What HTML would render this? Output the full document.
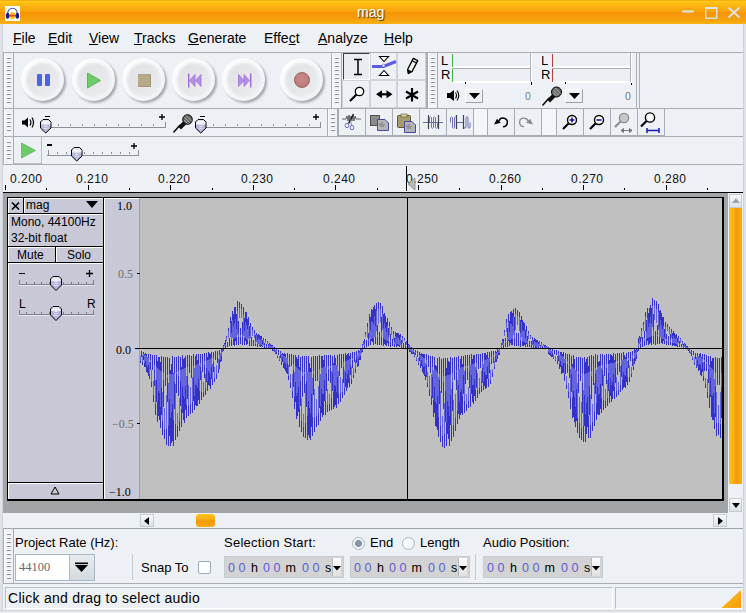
<!DOCTYPE html>
<html><head><meta charset="utf-8"><style>
*{margin:0;padding:0;box-sizing:border-box}
html,body{width:746px;height:613px;overflow:hidden;background:#edf0f5;font-family:"Liberation Sans", sans-serif;color:#000}
.a{position:absolute}
.t{position:absolute;white-space:nowrap;line-height:1}
.grip{position:absolute;border-left:1px solid #a9adb3;border-right:1px solid #a9adb3;box-shadow:inset 1px 0 0 #fff;
 background:repeating-linear-gradient(to bottom, transparent 0 2px, #fbfcfd 2px 3px, #8e9298 3px 4px) 3px 2px/4px calc(100% - 4px) no-repeat}
.hl{position:absolute;height:1px;background:#a9adb3}
.vl{position:absolute;width:1px;background:#a9adb3}
.eb{position:absolute;top:109px;width:28px;height:27px;border-left:1px solid #a9adb3;border-right:1px solid #a9adb3;border-bottom:1px solid #a9adb3}
.tb{position:absolute;width:28px;height:28px;border:1px solid #c8ccd2}
u{text-decoration:underline;text-underline-offset:1px;text-decoration-thickness:1px}
</style></head><body>
<div class="a" style="left:0;top:0;width:746px;height:24px;background:linear-gradient(to bottom,#f2b015 0px,#f2b015 1px,#ffc814 1px,#fdbb12 4px,#fbac0e 8px,#f9a30c 12px,#f79500 12px,#f5990a 15px,#f4a00e 19px,#f6ab12 22.5px,#f9b515 24px)"></div>
<div class="a" style="left:5px;top:6px;width:15px;height:15px;background:#ffffff"></div>
<svg class="a" style="left:5px;top:6px" width="15" height="15" viewBox="0 0 15 15">
 <path d="M2.8 9 V7 A4.7 4.7 0 0 1 12.2 7 V9" fill="none" stroke="#4848b0" stroke-width="1.1"/>
 <ellipse cx="7.5" cy="9.6" rx="3.4" ry="3.6" fill="#f8c428"/><rect x="4.2" y="8.8" width="6.6" height="1.8" fill="#f04812"/>
 <ellipse cx="2.6" cy="9.8" rx="1.7" ry="3" fill="#16169a"/><ellipse cx="12.4" cy="9.8" rx="1.7" ry="3" fill="#16169a"/>
</svg>
<div class="t" style="left:357px;top:5px;font-size:14px;color:#fff;text-shadow:1px 1px 1px #4a3000">mag</div>
<svg class="a" style="left:680px;top:4px" width="64" height="16" viewBox="0 0 64 16">
 <rect x="2" y="6.5" width="12" height="2" rx="1" fill="#dde6ee"/>
 <rect x="25.7" y="3.7" width="11" height="10.5" fill="none" stroke="#dde6ee" stroke-width="1.3"/><rect x="25" y="3" width="12.4" height="2" fill="#dde6ee"/>
 <path d="M48.5 3.5 L59.5 13.5 M59.5 3.5 L48.5 13.5" stroke="#dde6ee" stroke-width="1.7"/>
</svg>
<div class="a" style="left:0;top:24px;width:3px;height:589px;background:#dfe3e9;border-right:1px solid #cfd3d9"></div>
<div class="a" style="left:743px;top:24px;width:3px;height:589px;background:#dfe3e9;border-left:1px solid #cfd3d9"></div>

<div class="t" style="left:13px;top:31px;font-size:14px"><u>F</u>ile</div>
<div class="t" style="left:48px;top:31px;font-size:14px"><u>E</u>dit</div>
<div class="t" style="left:89px;top:31px;font-size:14px"><u>V</u>iew</div>
<div class="t" style="left:134px;top:31px;font-size:14px"><u>T</u>racks</div>
<div class="t" style="left:188px;top:31px;font-size:14px"><u>G</u>enerate</div>
<div class="t" style="left:264px;top:31px;font-size:14px">Effe<u>c</u>t</div>
<div class="t" style="left:318px;top:31px;font-size:14px"><u>A</u>nalyze</div>
<div class="t" style="left:384px;top:31px;font-size:14px"><u>H</u>elp</div>
<div class="hl" style="left:3px;top:52px;width:740px"></div>
<div class="hl" style="left:3px;top:108px;width:740px"></div>
<div class="hl" style="left:3px;top:136px;width:740px"></div>
<div class="hl" style="left:3px;top:164px;width:740px"></div>
<div class="grip" style="left:3px;top:53px;height:55px;width:11px"></div><div class="grip" style="left:331px;top:53px;height:55px;width:11px"></div><div class="grip" style="left:427px;top:53px;height:55px;width:11px"></div>
<div class="vl" style="left:636px;top:53px;height:55px"></div>
<div class="vl" style="left:639px;top:53px;height:55px"></div>
<div class="vl" style="left:426px;top:53px;height:55px"></div>
<div class="grip" style="left:3px;top:109px;height:27px;width:11px"></div><div class="grip" style="left:327px;top:109px;height:27px;width:11px"></div>
<div class="vl" style="left:664px;top:109px;height:27px"></div>
<div class="grip" style="left:3px;top:137px;height:27px;width:11px"></div>

<div class="a" style="left:23px;top:60px;width:43px;height:43px;border-radius:50%;background:#a4a7ad;filter:blur(1.2px)"></div>
<div class="a" style="left:21px;top:58px;width:43px;height:43px;border-radius:50%;
background:linear-gradient(135deg,#ffffff 0%,#f7f8fa 50%,#eff1f4 100%);filter:blur(0.6px)"></div>
<div class="a" style="left:26px;top:63px;width:34px;height:34px;border-radius:50%;
background:linear-gradient(135deg,#e0e2e6 0%,#e6e8ec 60%,#eceef1 100%);filter:blur(1px)"></div>
<div class="a" style="left:74px;top:60px;width:43px;height:43px;border-radius:50%;background:#a4a7ad;filter:blur(1.2px)"></div>
<div class="a" style="left:72px;top:58px;width:43px;height:43px;border-radius:50%;
background:linear-gradient(135deg,#ffffff 0%,#f7f8fa 50%,#eff1f4 100%);filter:blur(0.6px)"></div>
<div class="a" style="left:77px;top:63px;width:34px;height:34px;border-radius:50%;
background:linear-gradient(135deg,#e0e2e6 0%,#e6e8ec 60%,#eceef1 100%);filter:blur(1px)"></div>
<div class="a" style="left:124px;top:60px;width:43px;height:43px;border-radius:50%;background:#a4a7ad;filter:blur(1.2px)"></div>
<div class="a" style="left:122px;top:58px;width:43px;height:43px;border-radius:50%;
background:linear-gradient(135deg,#ffffff 0%,#f7f8fa 50%,#eff1f4 100%);filter:blur(0.6px)"></div>
<div class="a" style="left:127px;top:63px;width:34px;height:34px;border-radius:50%;
background:linear-gradient(135deg,#e0e2e6 0%,#e6e8ec 60%,#eceef1 100%);filter:blur(1px)"></div>
<div class="a" style="left:174px;top:60px;width:43px;height:43px;border-radius:50%;background:#a4a7ad;filter:blur(1.2px)"></div>
<div class="a" style="left:172px;top:58px;width:43px;height:43px;border-radius:50%;
background:linear-gradient(135deg,#ffffff 0%,#f7f8fa 50%,#eff1f4 100%);filter:blur(0.6px)"></div>
<div class="a" style="left:177px;top:63px;width:34px;height:34px;border-radius:50%;
background:linear-gradient(135deg,#e0e2e6 0%,#e6e8ec 60%,#eceef1 100%);filter:blur(1px)"></div>
<div class="a" style="left:224px;top:60px;width:43px;height:43px;border-radius:50%;background:#a4a7ad;filter:blur(1.2px)"></div>
<div class="a" style="left:222px;top:58px;width:43px;height:43px;border-radius:50%;
background:linear-gradient(135deg,#ffffff 0%,#f7f8fa 50%,#eff1f4 100%);filter:blur(0.6px)"></div>
<div class="a" style="left:227px;top:63px;width:34px;height:34px;border-radius:50%;
background:linear-gradient(135deg,#e0e2e6 0%,#e6e8ec 60%,#eceef1 100%);filter:blur(1px)"></div>
<div class="a" style="left:282px;top:60px;width:43px;height:43px;border-radius:50%;background:#a4a7ad;filter:blur(1.2px)"></div>
<div class="a" style="left:280px;top:58px;width:43px;height:43px;border-radius:50%;
background:linear-gradient(135deg,#ffffff 0%,#f7f8fa 50%,#eff1f4 100%);filter:blur(0.6px)"></div>
<div class="a" style="left:285px;top:63px;width:34px;height:34px;border-radius:50%;
background:linear-gradient(135deg,#e0e2e6 0%,#e6e8ec 60%,#eceef1 100%);filter:blur(1px)"></div>
<div class="a" style="left:37px;top:74px;width:5px;height:12px;background:#4a66e6;border-radius:1px"></div>
<div class="a" style="left:45px;top:74px;width:5px;height:12px;background:#4a66e6;border-radius:1px"></div>
<svg class="a" style="left:86px;top:71.5px" width="16" height="17"><path d="M1.5 1 L14.5 8.5 L1.5 16Z" fill="#6ccc68" stroke="#48a848" stroke-width="0.8"/></svg>
<div class="a" style="left:138px;top:74px;width:13px;height:13px;background:#b5a989;box-shadow:inset -1px -1px 0 #a39778"></div>
<svg class="a" style="left:187px;top:73px" width="17" height="15"><rect x="1" y="0.5" width="1.4" height="14" fill="#9868d0"/><path d="M8 1.5 L2.5 7.5 L8 13.5Z M14 1.5 L8.5 7.5 L14 13.5Z" fill="#b48ee8" stroke="#9868d0" stroke-width="0.7"/></svg>
<svg class="a" style="left:237px;top:73px" width="17" height="15"><rect x="13" y="0.5" width="1.4" height="14" fill="#9868d0"/><path d="M1.5 1.5 L7 7.5 L1.5 13.5Z M7 1.5 L12.5 7.5 L7 13.5Z" fill="#b48ee8" stroke="#9868d0" stroke-width="0.7"/></svg>
<div class="a" style="left:294px;top:72px;width:16px;height:16px;border-radius:50%;background:radial-gradient(circle at 45% 40%,#c88a8a,#bc7c7c 70%);border:1px solid #986060"></div>


<div class="a" style="left:343px;top:53px;width:27px;height:27px;border-top:1px solid #3c4044;border-left:1px solid #3c4044;border-right:1px solid #fff;border-bottom:1px solid #fff;background:#e9ecf1"></div>
<div class="a" style="left:370px;top:53px;width:27px;height:27px;border:1px solid #d0d4da;border-top:0"></div>
<div class="a" style="left:397px;top:53px;width:29px;height:27px;border:1px solid #d0d4da;border-top:0"></div>
<div class="a" style="left:342px;top:80px;width:28px;height:28px;border:1px solid #d0d4da"></div>
<div class="a" style="left:370px;top:80px;width:27px;height:28px;border:1px solid #d0d4da"></div>
<div class="a" style="left:397px;top:80px;width:29px;height:28px;border:1px solid #d0d4da"></div>
<svg class="a" style="left:342px;top:53px" width="84" height="55">
 <path d="M12 6.5 H20 M16 6.5 V21.5 M12 21.5 H20" stroke="#000" stroke-width="1.5" fill="none"/>
 <path d="M37.5 3.5 H46.5 L42 8.5Z M37.5 22.5 H46.5 L42 17.5Z" fill="#fff" stroke="#000" stroke-width="1.1"/>
 <path d="M30 13.5 H41.5 L54 8.5" stroke="#5c5ce0" stroke-width="3" fill="none"/>
 <circle cx="41.5" cy="12.5" r="1.4" fill="#fff" stroke="#5c5ce0" stroke-width="0.6"/>
 <path d="M66.3 20.5 L65.7 16.3 L71.3 5.4 L75.7 7.6 L70.1 18.5Z" fill="#f0f0f0" stroke="#000" stroke-width="1.3" stroke-linejoin="round"/>
 <path d="M66.3 20.5 L65.8 16.8 L69.6 18.7Z" fill="#000" stroke="#000" stroke-width="0.8"/>
 <path d="M70.2 7.8 L74.6 10" stroke="#000" stroke-width="1.1"/>
 <circle cx="17.5" cy="38.5" r="4.2" fill="#fff" stroke="#000" stroke-width="1.3"/>
 <path d="M14.5 41.5 L8 48" stroke="#000" stroke-width="2.2"/>
 <path d="M38 41.3 H47" stroke="#000" stroke-width="2.2"/><path d="M34 41.3 L40 37.3 V45.3Z M50.5 41.3 L44.5 37.3 V45.3Z" fill="#000"/>
 <path d="M70 35 V48.5 M64 38.5 L76 45.5 M76 38.5 L64 45.5" stroke="#000" stroke-width="2.2"/>
</svg>

<div class="t" style="left:441px;top:54px;font-size:13px">L</div>
<div class="t" style="left:441px;top:68px;font-size:13px">R</div>
<div class="a" style="left:452px;top:53px;width:80px;height:15px;border-bottom:2px solid #fff;border-right:1px solid #fff;background:#eceff4"></div>
<div class="a" style="left:452px;top:68px;width:80px;height:15px;border-top:1px solid #a9adb3;border-bottom:2px solid #fff;border-right:1px solid #fff;background:#eceff4"></div>
<div class="a" style="left:530px;top:53px;width:1px;height:29px;background:#b0b4ba"></div>
<div class="a" style="left:452px;top:54px;width:1px;height:13px;background:#40b040"></div>
<div class="a" style="left:452px;top:69px;width:1px;height:13px;background:#40b040"></div>
<div class="a" style="left:465px;top:82px;width:1px;height:2px;background:#000"></div>
<div class="a" style="left:531px;top:82px;width:1px;height:3px;background:#000"></div>
<div class="a" style="left:465px;top:89px;width:18px;height:14px;border:1px solid;border-color:#fff #9ca0a6 #9ca0a6 #fff;background:#eef0f4"></div>
<svg class="a" style="left:469px;top:93px" width="11" height="6"><path d="M0 0 H11 L5.5 6Z" fill="#000"/></svg>
<div class="t" style="left:525px;top:91px;font-size:10.5px;color:#7a7a7a">0</div>
<div class="t" style="left:541px;top:54px;font-size:13px">L</div>
<div class="t" style="left:541px;top:68px;font-size:13px">R</div>
<div class="a" style="left:552px;top:53px;width:80px;height:15px;border-bottom:2px solid #fff;border-right:1px solid #fff;background:#eceff4"></div>
<div class="a" style="left:552px;top:68px;width:80px;height:15px;border-top:1px solid #a9adb3;border-bottom:2px solid #fff;border-right:1px solid #fff;background:#eceff4"></div>
<div class="a" style="left:630px;top:53px;width:1px;height:29px;background:#b0b4ba"></div>
<div class="a" style="left:552px;top:54px;width:1px;height:13px;background:#b04040"></div>
<div class="a" style="left:552px;top:69px;width:1px;height:13px;background:#b04040"></div>
<div class="a" style="left:565px;top:82px;width:1px;height:2px;background:#000"></div>
<div class="a" style="left:631px;top:82px;width:1px;height:3px;background:#000"></div>
<div class="a" style="left:565px;top:89px;width:18px;height:14px;border:1px solid;border-color:#fff #9ca0a6 #9ca0a6 #fff;background:#eef0f4"></div>
<svg class="a" style="left:569px;top:93px" width="11" height="6"><path d="M0 0 H11 L5.5 6Z" fill="#000"/></svg>
<div class="t" style="left:625px;top:91px;font-size:10.5px;color:#7a7a7a">0</div>
<div class="a" style="left:532px;top:53px;width:10px;height:30px;background:#edf0f5"></div>
<div class="a" style="left:530px;top:53px;width:1px;height:29px;background:#b0b4ba"></div>
<div class="a" style="left:531px;top:53px;width:1px;height:30px;background:#fff"></div>
<div class="a" style="left:531px;top:82px;width:1px;height:3px;background:#000"></div>
<div class="a" style="left:631px;top:53px;width:1px;height:30px;background:#fff"></div>
<svg class="a" style="left:446px;top:89px" width="14" height="13"><path d="M1 4 H4 L8 1 V12 L4 9 H1Z" fill="#000"/><path d="M9.5 3.5 Q11.5 6.5 9.5 9.5 M11 1.5 Q14.5 6.5 11 11.5" stroke="#000" stroke-width="1.1" fill="none"/></svg>
<svg class="a" style="left:541px;top:86px" width="22" height="21"><path d="M1.5 19.5 L8 12" stroke="#000" stroke-width="1.4"/><path d="M6 13.5 L9 16.5 L14.5 11 L11.5 8Z" fill="#111"/><circle cx="15.5" cy="6" r="5" fill="#666" stroke="#000" stroke-width="1"/><path d="M12.5 4 L17.5 9 M14 2 L19.5 7.5 M12 6.5 L15.5 10" stroke="#c0c0c0" stroke-width="0.8"/></svg>

<svg class="a" style="left:21px;top:117px" width="14" height="11"><path d="M1 3.5 H3.5 L7 0.5 V10.5 L3.5 7.5 H1Z" fill="#000"/><path d="M9 2.5 Q10.8 5.5 9 8.5 M11 0.5 Q14 5.5 11 10.5" stroke="#000" stroke-width="1.2" fill="none"/></svg>
<div class="a" style="left:46px;top:127px;width:120px;height:1px;background:#8c9096"></div><div class="a" style="left:46px;top:122px;width:1px;height:5px;background:#8c9096"></div><div class="a" style="left:58px;top:124px;width:1px;height:2px;background:#8c9096"></div><div class="a" style="left:70px;top:124px;width:1px;height:2px;background:#8c9096"></div><div class="a" style="left:82px;top:124px;width:1px;height:2px;background:#8c9096"></div><div class="a" style="left:94px;top:124px;width:1px;height:2px;background:#8c9096"></div><div class="a" style="left:106px;top:124px;width:1px;height:2px;background:#8c9096"></div><div class="a" style="left:118px;top:124px;width:1px;height:2px;background:#8c9096"></div><div class="a" style="left:129px;top:124px;width:1px;height:2px;background:#8c9096"></div><div class="a" style="left:141px;top:124px;width:1px;height:2px;background:#8c9096"></div><div class="a" style="left:153px;top:124px;width:1px;height:2px;background:#8c9096"></div><div class="a" style="left:165px;top:122px;width:1px;height:5px;background:#8c9096"></div><div class="a" style="left:45px;top:115.5px;width:5px;height:1.5px;background:#000"></div><svg class="a" style="left:159px;top:114px" width="7" height="7"><path d="M0 3 H6 M3 0 V6" stroke="#000" stroke-width="1.3"/></svg><svg class="a" style="left:40px;top:119px" width="12" height="15"><path d="M3 0.5 H8.5 L11 3 V9 L5.75 14 L0.5 9 V3Z" fill="#b8b8dc" stroke="#000" stroke-width="1"/><path d="M1.2 3.2 L3.2 1.2 H8.3 L10.3 3.2 V5.5 H1.2Z" fill="#f0f0f6"/><path d="M4 5.5 H7.5 M4 7.5 H7.5 M4 9.5 H7.5" stroke="#e8e8f4" stroke-width="0.8"/></svg>
<svg class="a" style="left:172px;top:114px" width="22" height="20"><path d="M1.5 18.5 L8 11" stroke="#000" stroke-width="1.4"/><path d="M6 12.5 L9 15.5 L14.5 10 L11.5 7Z" fill="#111"/><circle cx="15.5" cy="5.5" r="4.8" fill="#666" stroke="#000" stroke-width="1"/><path d="M12.5 3.5 L17.5 8.5 M14 1.5 L19.5 7 M12 6 L15.5 9.5" stroke="#c0c0c0" stroke-width="0.8"/></svg>
<div class="a" style="left:201px;top:127px;width:120px;height:1px;background:#8c9096"></div><div class="a" style="left:202px;top:122px;width:1px;height:5px;background:#8c9096"></div><div class="a" style="left:213px;top:124px;width:1px;height:2px;background:#8c9096"></div><div class="a" style="left:225px;top:124px;width:1px;height:2px;background:#8c9096"></div><div class="a" style="left:237px;top:124px;width:1px;height:2px;background:#8c9096"></div><div class="a" style="left:249px;top:124px;width:1px;height:2px;background:#8c9096"></div><div class="a" style="left:261px;top:124px;width:1px;height:2px;background:#8c9096"></div><div class="a" style="left:273px;top:124px;width:1px;height:2px;background:#8c9096"></div><div class="a" style="left:285px;top:124px;width:1px;height:2px;background:#8c9096"></div><div class="a" style="left:297px;top:124px;width:1px;height:2px;background:#8c9096"></div><div class="a" style="left:309px;top:124px;width:1px;height:2px;background:#8c9096"></div><div class="a" style="left:320px;top:122px;width:1px;height:5px;background:#8c9096"></div><div class="a" style="left:200px;top:115.5px;width:5px;height:1.5px;background:#000"></div><svg class="a" style="left:313px;top:114px" width="7" height="7"><path d="M0 3 H6 M3 0 V6" stroke="#000" stroke-width="1.3"/></svg><svg class="a" style="left:195px;top:119px" width="12" height="15"><path d="M3 0.5 H8.5 L11 3 V9 L5.75 14 L0.5 9 V3Z" fill="#b8b8dc" stroke="#000" stroke-width="1"/><path d="M1.2 3.2 L3.2 1.2 H8.3 L10.3 3.2 V5.5 H1.2Z" fill="#f0f0f6"/><path d="M4 5.5 H7.5 M4 7.5 H7.5 M4 9.5 H7.5" stroke="#e8e8f4" stroke-width="0.8"/></svg>
<div class="eb" style="left:338px"></div>
<div class="eb" style="left:365px"></div>
<div class="eb" style="left:392px"></div>
<div class="eb" style="left:419px"></div>
<div class="eb" style="left:446px"></div>
<div class="eb" style="left:487px"></div>
<div class="eb" style="left:514px"></div>
<div class="eb" style="left:556px"></div>
<div class="eb" style="left:583px"></div>
<div class="eb" style="left:610px"></div>
<div class="eb" style="left:637px"></div>
<div class="a" style="left:474px;top:109px;width:13px;height:27px;background:#f3f5f8;border-bottom:1px solid #a9adb3"></div>
<div class="a" style="left:542px;top:109px;width:14px;height:27px;background:#f3f5f8;border-bottom:1px solid #a9adb3"></div>
<svg class="a" style="left:337px;top:109px" width="140" height="27">
 <path d="M5 10 H9 L10 7 L11 12 L12 6 L13 12 L14 7 L15 12 L16 6 L17 12 L18 7 L19 10 H24" stroke="#444" stroke-width="0.8" fill="none"/>
 <path d="M16.5 5 L11.5 14.5" stroke="#222" stroke-width="1.6"/><path d="M12.5 7 L14.5 16" stroke="#666" stroke-width="0.7"/>
 <ellipse cx="10" cy="16.5" rx="1.8" ry="2.2" fill="#eef0f5" stroke="#6a6ad0" stroke-width="1"/><ellipse cx="15" cy="18.5" rx="1.8" ry="2.2" fill="#eef0f5" stroke="#6a6ad0" stroke-width="1"/>
 <rect x="33.5" y="6.5" width="9" height="10" fill="#8c8c8c" stroke="#505050"/>
 <path d="M40.5 10.5 H48 L51.5 14 V21.5 H40.5Z" fill="#b4b4b8" stroke="#4848a0"/>
 <path d="M42 16 L43 14 L44 18 L45 13 L46 18 L47 15 L48 16" stroke="#777" stroke-width="0.6" fill="none"/>
 <rect x="60.5" y="6.5" width="13" height="12" rx="1" fill="#a49c6c" stroke="#5c5838"/><rect x="64" y="5" width="6" height="3" fill="#d8d0a0" stroke="#5c5838" stroke-width="0.6"/>
 <path d="M67.5 12.5 H75 L78.5 16 V23.5 H67.5Z" fill="#b4b4b8" stroke="#4848a0"/>
 <path d="M69 18 L70 16 L71 20 L72 15 L73 20 L74 17 L75 18" stroke="#777" stroke-width="0.6" fill="none"/>
 <path d="M86 13.5 H106 M119.5 13.5 H126.5" stroke="#6a6ab0" stroke-width="1"/>
 <path d="M91.5 6 V20 M101.5 6 V20 M119.5 6 V20 M126.5 6 V20" stroke="#404048" stroke-width="1.2"/>
 <path d="M92.5 13 V8.5 Q93.5 7 94.5 8.5 V18.5 Q95.5 20 96.5 18.5 V8.5 Q97.5 7 98.5 8.5 V18.5 Q99.5 20 100.5 18.5 V13" stroke="#7070b8" stroke-width="1" fill="none"/>
 <path d="M113.5 13.5 V8.5 Q114.5 7 115.5 8.5 V18.5 Q116.5 20 117.5 18.5 V8.5 Q118.5 7 119 8.5" stroke="#7070b8" stroke-width="1" fill="none"/>
 <path d="M127 18.5 Q128 20 129 18.5 V8.5 Q130 7 131 8.5 V18.5 Q132 20 133 18.5 V13.5" stroke="#7070b8" stroke-width="1" fill="none"/>
</svg>
<svg class="a" style="left:487px;top:109px" width="180" height="27">
 <path d="M12 12 A4.3 4.3 0 1 1 16 17.7" stroke="#000" stroke-width="1.5" fill="none"/><path d="M7 15.5 L10 9.8 L13.8 13.8Z" fill="#000"/>
 <path d="M41 12 A4.3 4.3 0 1 0 37 17.7" stroke="#888" stroke-width="1.3" fill="none"/><path d="M46 15.5 L43 9.8 L39.2 13.8Z" fill="#888"/>
 <circle cx="85" cy="11" r="4.5" fill="#fff" stroke="#000" stroke-width="1.4"/><path d="M81.5 14.5 L76 20" stroke="#000" stroke-width="2.2"/><path d="M82.5 11 H87.5 M85 8.5 V13.5" stroke="#1010b0" stroke-width="1.6"/>
 <circle cx="112" cy="11" r="4.5" fill="#fff" stroke="#000" stroke-width="1.4"/><path d="M108.5 14.5 L103 20" stroke="#000" stroke-width="2.2"/><path d="M109.5 11 H114.5" stroke="#1010b0" stroke-width="1.6"/>
 <circle cx="137" cy="9" r="4.6" fill="#c8c8c8" stroke="#8c8c8c" stroke-width="1.4"/><path d="M133.5 12.5 L128 18" stroke="#8c8c8c" stroke-width="2.2"/><path d="M134 21.5 H145 M134 21.5 L136.5 19.5 V23.5Z M145 21.5 L142.5 19.5 V23.5Z" stroke="#707070" stroke-width="0.9" fill="#707070"/>
 <circle cx="163" cy="8.5" r="4.6" fill="#fff" stroke="#000" stroke-width="1.4"/><path d="M159.5 12 L154 17.5" stroke="#000" stroke-width="2.2"/><path d="M160 21.5 H172 M160 19 V24 M172 19 V24" stroke="#1818c0" stroke-width="1.5"/>
</svg>

<div class="a" style="left:14px;top:137px;width:28px;height:27px;border-right:1px solid #b9bdc3;border-bottom:1px solid #b9bdc3"></div>
<svg class="a" style="left:20px;top:142px" width="18" height="17"><path d="M1.5 1 L15.5 8.5 L1.5 16Z" fill="#6ccc68" stroke="#48a848" stroke-width="0.6"/></svg>
<div class="a" style="left:47px;top:155px;width:91.5px;height:1px;background:#8c9096"></div><div class="a" style="left:48px;top:150px;width:1px;height:5px;background:#8c9096"></div><div class="a" style="left:57px;top:152px;width:1px;height:2px;background:#8c9096"></div><div class="a" style="left:66px;top:152px;width:1px;height:2px;background:#8c9096"></div><div class="a" style="left:75px;top:152px;width:1px;height:2px;background:#8c9096"></div><div class="a" style="left:84px;top:152px;width:1px;height:2px;background:#8c9096"></div><div class="a" style="left:93px;top:152px;width:1px;height:2px;background:#8c9096"></div><div class="a" style="left:102px;top:152px;width:1px;height:2px;background:#8c9096"></div><div class="a" style="left:111px;top:152px;width:1px;height:2px;background:#8c9096"></div><div class="a" style="left:120px;top:152px;width:1px;height:2px;background:#8c9096"></div><div class="a" style="left:129px;top:152px;width:1px;height:2px;background:#8c9096"></div><div class="a" style="left:138px;top:150px;width:1px;height:5px;background:#8c9096"></div><div class="a" style="left:47px;top:144px;width:5px;height:1.5px;background:#000"></div><svg class="a" style="left:130.5px;top:142.5px" width="7" height="7"><path d="M0 3 H6 M3 0 V6" stroke="#000" stroke-width="1.3"/></svg><svg class="a" style="left:71px;top:147px" width="12" height="15"><path d="M3 0.5 H8.5 L11 3 V9 L5.75 14 L0.5 9 V3Z" fill="#b8b8dc" stroke="#000" stroke-width="1"/><path d="M1.2 3.2 L3.2 1.2 H8.3 L10.3 3.2 V5.5 H1.2Z" fill="#f0f0f6"/><path d="M4 5.5 H7.5 M4 7.5 H7.5 M4 9.5 H7.5" stroke="#e8e8f4" stroke-width="0.8"/></svg>
<div class="a" style="left:3px;top:165px;width:740px;height:27px;background:#edf0f5"></div>
<div class="a" style="left:3px;top:192px;width:740px;height:1px;background:#000"></div>
<div class="a" style="left:5px;top:185px;width:1px;height:5px;background:#000"></div>
<div class="t" style="left:10px;top:173px;font-size:12px;letter-spacing:0.5px;color:#111">0.200</div>
<div class="a" style="left:46px;top:188px;width:1px;height:2px;background:#000"></div>
<div class="a" style="left:88px;top:185px;width:1px;height:5px;background:#000"></div>
<div class="t" style="left:76px;top:173px;font-size:12px;letter-spacing:0.5px;color:#111">0.210</div>
<div class="a" style="left:129px;top:188px;width:1px;height:2px;background:#000"></div>
<div class="a" style="left:170px;top:185px;width:1px;height:5px;background:#000"></div>
<div class="t" style="left:158px;top:173px;font-size:12px;letter-spacing:0.5px;color:#111">0.220</div>
<div class="a" style="left:212px;top:188px;width:1px;height:2px;background:#000"></div>
<div class="a" style="left:253px;top:185px;width:1px;height:5px;background:#000"></div>
<div class="t" style="left:241px;top:173px;font-size:12px;letter-spacing:0.5px;color:#111">0.230</div>
<div class="a" style="left:294px;top:188px;width:1px;height:2px;background:#000"></div>
<div class="a" style="left:335px;top:185px;width:1px;height:5px;background:#000"></div>
<div class="t" style="left:323px;top:173px;font-size:12px;letter-spacing:0.5px;color:#111">0.240</div>
<div class="a" style="left:377px;top:188px;width:1px;height:2px;background:#000"></div>
<div class="a" style="left:418px;top:185px;width:1px;height:5px;background:#000"></div>
<div class="t" style="left:406px;top:173px;font-size:12px;letter-spacing:0.5px;color:#111">0.250</div>
<div class="a" style="left:459px;top:188px;width:1px;height:2px;background:#000"></div>
<div class="a" style="left:501px;top:185px;width:1px;height:5px;background:#000"></div>
<div class="t" style="left:489px;top:173px;font-size:12px;letter-spacing:0.5px;color:#111">0.260</div>
<div class="a" style="left:542px;top:188px;width:1px;height:2px;background:#000"></div>
<div class="a" style="left:583px;top:185px;width:1px;height:5px;background:#000"></div>
<div class="t" style="left:571px;top:173px;font-size:12px;letter-spacing:0.5px;color:#111">0.270</div>
<div class="a" style="left:624px;top:188px;width:1px;height:2px;background:#000"></div>
<div class="a" style="left:666px;top:185px;width:1px;height:5px;background:#000"></div>
<div class="t" style="left:654px;top:173px;font-size:12px;letter-spacing:0.5px;color:#111">0.280</div>
<div class="a" style="left:707px;top:188px;width:1px;height:2px;background:#000"></div>
<div class="a" style="left:406px;top:166px;width:1px;height:25px;background:#000"></div>
<svg class="a" style="left:407px;top:177px" width="9" height="14"><path d="M8 1 V13 L1 7Z" fill="#b8b8b8" stroke="#888" stroke-width="0.8"/></svg>
<div class="a" style="left:3px;top:193px;width:740px;height:320px;background:#a2a5a8"></div>
<div class="a" style="left:7px;top:197px;width:717px;height:304px;background:#000"></div>
<div class="a" style="left:8px;top:198px;width:95px;height:301px;background:#c8c8d6"></div>
<div class="a" style="left:104px;top:198px;width:36px;height:301px;background:#c8c8d6;border-top:1px solid #fff;border-left:1px solid #fff"></div>
<div class="a" style="left:140px;top:198px;width:582px;height:301px;background:#c0c0c0"></div>
<div class="a" style="left:139px;top:198px;width:1px;height:301px;background:#a0a0aa"></div>

<div class="a" style="left:8px;top:213px;width:95px;height:1px;background:#000"></div>
<div class="a" style="left:23px;top:198px;width:1px;height:15px;background:#000"></div>
<div class="a" style="left:8px;top:198px;width:15px;height:1px;background:#fff"></div>
<div class="a" style="left:8px;top:198px;width:1px;height:15px;background:#fff"></div>
<div class="a" style="left:24px;top:198px;width:79px;height:1px;background:#fff"></div>
<div class="a" style="left:24px;top:198px;width:1px;height:15px;background:#fff"></div>
<svg class="a" style="left:9px;top:200px" width="13" height="12"><path d="M3 2.5 L10 9.5 M10 2.5 L3 9.5" stroke="#000" stroke-width="1.6"/></svg>
<div class="t" style="left:26px;top:199px;font-size:12px">mag</div>
<svg class="a" style="left:86px;top:201px" width="12" height="8"><path d="M0 0 H12 L6 7Z" fill="#000"/></svg>
<div class="a" style="left:8px;top:214px;width:95px;height:1px;background:#fff"></div>
<div class="a" style="left:8px;top:214px;width:1px;height:32px;background:#fff"></div>
<div class="t" style="left:11px;top:216px;font-size:12px">Mono, 44100Hz</div>
<div class="t" style="left:11px;top:232px;font-size:12px">32-bit float</div>
<div class="a" style="left:8px;top:246px;width:95px;height:1px;background:#000"></div>
<div class="a" style="left:8px;top:247px;width:95px;height:1px;background:#fff"></div>
<div class="a" style="left:8px;top:247px;width:1px;height:15px;background:#fff"></div>
<div class="a" style="left:55px;top:247px;width:1px;height:15px;background:#000"></div>
<div class="a" style="left:56px;top:247px;width:1px;height:15px;background:#fff"></div>
<div class="t" style="left:17px;top:249px;font-size:12px">Mute</div>
<div class="t" style="left:67px;top:249px;font-size:12px">Solo</div>
<div class="a" style="left:8px;top:262px;width:95px;height:1px;background:#000"></div>
<div class="a" style="left:8px;top:263px;width:95px;height:1px;background:#fff"></div>
<div class="a" style="left:8px;top:263px;width:1px;height:219px;background:#fff"></div>
<div class="a" style="left:8px;top:482px;width:95px;height:1px;background:#000"></div>
<div class="a" style="left:8px;top:483px;width:95px;height:1px;background:#fff"></div>
<div class="a" style="left:8px;top:483px;width:1px;height:16px;background:#fff"></div>
<svg class="a" style="left:50px;top:486px" width="10" height="9"><path d="M1 8 H9 L5 1Z" fill="#c8c8d6" stroke="#000" stroke-width="1"/></svg>

<div class="a" style="left:19px;top:284px;width:75px;height:1px;background:#80808a"></div><div class="a" style="left:19px;top:285px;width:75px;height:1px;background:#e8e8f0"></div><div class="a" style="left:19px;top:280px;width:1px;height:4px;background:#80808a"></div><div class="a" style="left:26px;top:282px;width:1px;height:2px;background:#80808a"></div><div class="a" style="left:34px;top:282px;width:1px;height:2px;background:#80808a"></div><div class="a" style="left:41px;top:282px;width:1px;height:2px;background:#80808a"></div><div class="a" style="left:49px;top:282px;width:1px;height:2px;background:#80808a"></div><div class="a" style="left:56px;top:282px;width:1px;height:2px;background:#80808a"></div><div class="a" style="left:63px;top:282px;width:1px;height:2px;background:#80808a"></div><div class="a" style="left:71px;top:282px;width:1px;height:2px;background:#80808a"></div><div class="a" style="left:78px;top:282px;width:1px;height:2px;background:#80808a"></div><div class="a" style="left:86px;top:282px;width:1px;height:2px;background:#80808a"></div><div class="a" style="left:93px;top:280px;width:1px;height:4px;background:#80808a"></div><svg class="a" style="left:50px;top:276px" width="12" height="15"><path d="M3 0.5 H9 L11.5 3 V9 L6 14.5 L0.5 9 V3Z" fill="#b4b4dc" stroke="#000" stroke-width="1"/><path d="M1.2 3.2 L3.2 1.2 H8.8 L10.8 3.2 V5 H1.2Z" fill="#ececf4"/><path d="M4 5.5 H8 M4 7.5 H8 M4 9.5 H8" stroke="#e8e8f4" stroke-width="0.8"/></svg>
<div class="a" style="left:19px;top:273px;width:6px;height:1px;background:#000"></div>
<svg class="a" style="left:86px;top:270px" width="8" height="8"><path d="M0 3.5 H7 M3.5 0 V7" stroke="#000" stroke-width="1.3"/></svg>
<div class="a" style="left:19px;top:314px;width:75px;height:1px;background:#80808a"></div><div class="a" style="left:19px;top:315px;width:75px;height:1px;background:#e8e8f0"></div><div class="a" style="left:19px;top:310px;width:1px;height:4px;background:#80808a"></div><div class="a" style="left:26px;top:312px;width:1px;height:2px;background:#80808a"></div><div class="a" style="left:34px;top:312px;width:1px;height:2px;background:#80808a"></div><div class="a" style="left:41px;top:312px;width:1px;height:2px;background:#80808a"></div><div class="a" style="left:49px;top:312px;width:1px;height:2px;background:#80808a"></div><div class="a" style="left:56px;top:312px;width:1px;height:2px;background:#80808a"></div><div class="a" style="left:63px;top:312px;width:1px;height:2px;background:#80808a"></div><div class="a" style="left:71px;top:312px;width:1px;height:2px;background:#80808a"></div><div class="a" style="left:78px;top:312px;width:1px;height:2px;background:#80808a"></div><div class="a" style="left:86px;top:312px;width:1px;height:2px;background:#80808a"></div><div class="a" style="left:93px;top:310px;width:1px;height:4px;background:#80808a"></div><svg class="a" style="left:50px;top:306px" width="12" height="15"><path d="M3 0.5 H9 L11.5 3 V9 L6 14.5 L0.5 9 V3Z" fill="#b4b4dc" stroke="#000" stroke-width="1"/><path d="M1.2 3.2 L3.2 1.2 H8.8 L10.8 3.2 V5 H1.2Z" fill="#ececf4"/><path d="M4 5.5 H8 M4 7.5 H8 M4 9.5 H8" stroke="#e8e8f4" stroke-width="0.8"/></svg>
<div class="t" style="left:19px;top:298px;font-size:12px">L</div><div class="t" style="left:87px;top:298px;font-size:12px">R</div>

<div class="t" style="left:117px;top:200px;font-size:12px;font-family:'Liberation Serif', serif">1.0</div>
<div class="t" style="left:118px;top:268px;font-size:12px;font-family:'Liberation Serif', serif;color:#707070">0.5</div>
<div class="t" style="left:116px;top:344px;font-size:12px;font-family:'Liberation Serif', serif">0.0</div>
<div class="t" style="left:112px;top:418px;font-size:12px;font-family:'Liberation Serif', serif;color:#707070">&#8722;0.5</div>
<div class="t" style="left:109px;top:486px;font-size:12px;font-family:'Liberation Serif', serif">&#8722;1.0</div>
<div class="a" style="left:135px;top:348px;width:5px;height:1px;background:#000"></div>
<div class="a" style="left:137px;top:273px;width:3px;height:1px;background:#000"></div>
<div class="a" style="left:137px;top:423px;width:3px;height:1px;background:#000"></div>

<svg class="a" style="left:0;top:0" width="746" height="613" shape-rendering="crispEdges">
<path d="M140.5 356V363M141.5 351V357M142.5 355V365M143.5 352V360M144.5 354V367M145.5 353V367M146.5 354V372M147.5 357V373M148.5 354V376M149.5 362V379M150.5 354V370M151.5 370V387M152.5 355V370M153.5 381V402M154.5 355V386M155.5 380V415M156.5 355V402M157.5 361V422M158.5 357V416M159.5 357V420M160.5 362V428M161.5 356V415M162.5 392V435M163.5 357V407M164.5 408V439M165.5 357V386M166.5 395V445M167.5 357V402M168.5 383V446M169.5 358V436M170.5 370V446M171.5 364V443M172.5 356V441M173.5 373V446M174.5 357V409M175.5 384V440M176.5 357V393M177.5 413V437M178.5 356V396M179.5 398V431M180.5 357V406M181.5 367V427M182.5 355V413M183.5 359V420M184.5 358V423M185.5 356V410M186.5 376V418M187.5 355V399M188.5 385V416M189.5 355V373M190.5 387V414M191.5 356V378M192.5 377V413M193.5 354V401M194.5 368V410M195.5 356V405M196.5 354V406M197.5 360V406M198.5 354V400M199.5 365V404M200.5 354V380M201.5 371V400M202.5 354V372M203.5 382V397M204.5 353V378M205.5 374V395M206.5 353V382M207.5 357V391M208.5 352V385M209.5 353V386M210.5 354V389M211.5 352V379M212.5 364V385M213.5 352V372M214.5 367V382M215.5 351V360M216.5 365V379M217.5 351V363M218.5 359V373M219.5 350V369M220.5 353V362M221.5 349V361M222.5 349V352M223.5 345V351M224.5 343V346M225.5 340V348M226.5 336V341M227.5 342V347M228.5 328V338M229.5 338V346M230.5 317V337M231.5 321V346M232.5 311V338M233.5 314V345M234.5 307V346M235.5 307V341M236.5 314V345M237.5 301V335M238.5 321V345M239.5 302V318M240.5 328V344M241.5 304V318M242.5 322V345M243.5 307V336M244.5 318V345M245.5 312V341M246.5 312V345M247.5 319V344M248.5 317V339M249.5 326V346M250.5 323V338M251.5 337V346M252.5 327V336M253.5 340V346M254.5 330V338M255.5 335V346M256.5 333V342M257.5 335V347M258.5 334V344M259.5 335V346M260.5 336V347M261.5 336V346M262.5 340V347M263.5 338V345M264.5 343V348M265.5 339V343M266.5 344V348M267.5 341V344M268.5 344V349M269.5 343V348M270.5 344V349M271.5 345V349M272.5 345V351M273.5 347V351M274.5 347V352M275.5 350V354M276.5 349V354M277.5 355V358M278.5 350V355M279.5 356V361M280.5 351V358M281.5 354V365M282.5 353V362M283.5 354V368M284.5 353V369M285.5 354V371M286.5 358V373M287.5 353V374M288.5 365V380M289.5 354V367M290.5 374V388M291.5 354V366M292.5 374V398M293.5 355V387M294.5 372V409M295.5 355V402M296.5 357V419M297.5 359V416M298.5 355V412M299.5 367V427M300.5 357V406M301.5 398V432M302.5 356V397M303.5 414V437M304.5 356V393M305.5 384V438M306.5 356V407M307.5 372V440M308.5 356V435M309.5 363V438M310.5 368V440M311.5 357V427M312.5 378V436M313.5 356V395M314.5 389V432M315.5 356V381M316.5 399V427M317.5 356V381M318.5 386V425M319.5 355V408M320.5 374V421M321.5 356V413M322.5 356V417M323.5 360V415M324.5 355V401M325.5 367V415M326.5 355V391M327.5 389V412M328.5 355V381M329.5 394V411M330.5 355V383M331.5 371V410M332.5 356V391M333.5 363V409M334.5 355V407M335.5 358V405M336.5 365V408M337.5 355V398M338.5 371V404M339.5 354V376M340.5 377V402M341.5 354V368M342.5 379V398M343.5 354V383M344.5 370V395M345.5 353V387M346.5 355V391M347.5 354V388M348.5 353V383M349.5 356V387M350.5 353V375M351.5 367V384M352.5 352V368M353.5 368V378M354.5 352V362M355.5 360V373M356.5 351V363M357.5 355V367M358.5 350V366M359.5 351V360M360.5 349V360M361.5 348V353M362.5 344V352M363.5 341V345M364.5 339V349M365.5 332V337M366.5 340V347M367.5 323V338M368.5 333V346M369.5 314V338M370.5 317V345M371.5 309V341M372.5 310V342M373.5 307V345M374.5 305V337M375.5 309V344M376.5 303V331M377.5 325V345M378.5 302V324M379.5 332V345M380.5 303V322M381.5 317V345M382.5 306V330M383.5 314V346M384.5 313V344M385.5 316V345M386.5 322V346M387.5 318V343M388.5 328V346M389.5 322V335M390.5 334V347M391.5 327V335M392.5 339V346M393.5 331V340M394.5 338V347M395.5 332V344M396.5 333V347M397.5 333V346M398.5 333V346M399.5 335V347M400.5 334V345M401.5 340V348M402.5 336V343M403.5 343V348M404.5 338V341M405.5 342V348M406.5 341V345M407.5 344V350M408.5 344V349M409.5 345V352M410.5 347V352M411.5 347V354M412.5 350V354M413.5 349V354M414.5 352V357M415.5 350V355M416.5 357V361M417.5 351V357M418.5 358V365M419.5 352V361M420.5 354V368M421.5 353V366M422.5 354V372M423.5 354V374M424.5 354V376M425.5 363V380M426.5 354V377M427.5 372V387M428.5 355V367M429.5 376V396M430.5 356V373M431.5 374V405M432.5 356V398M433.5 370V417M434.5 357V413M435.5 365V426M436.5 366V427M437.5 358V430M438.5 377V437M439.5 357V404M440.5 391V442M441.5 359V393M442.5 416V447M443.5 358V409M444.5 403V448M445.5 358V422M446.5 368V446M447.5 358V434M448.5 361V439M449.5 362V446M450.5 357V425M451.5 389V441M452.5 358V411M453.5 400V437M454.5 357V380M455.5 394V431M456.5 357V390M457.5 380V424M458.5 356V414M459.5 369V419M460.5 359V415M461.5 356V413M462.5 364V415M463.5 356V394M464.5 371V413M465.5 355V384M466.5 394V411M467.5 355V380M468.5 387V408M469.5 355V388M470.5 365V407M471.5 354V394M472.5 359V402M473.5 355V404M474.5 355V396M475.5 367V401M476.5 354V388M477.5 373V398M478.5 354V369M479.5 378V394M480.5 354V368M481.5 371V392M482.5 353V383M483.5 364V390M484.5 353V386M485.5 353V389M486.5 355V388M487.5 352V379M488.5 358V387M489.5 352V373M490.5 370V384M491.5 351V364M492.5 369V377M493.5 351V363M494.5 361V369M495.5 351V362M496.5 352V362M497.5 349V359M498.5 350V355M499.5 348V355M500.5 348V349M501.5 343V349M502.5 339V345M503.5 339V348M504.5 330V336M505.5 338V347M506.5 319V332M507.5 328V347M508.5 314V341M509.5 321V346M510.5 312V343M511.5 311V345M512.5 313V345M513.5 309V335M514.5 317V346M515.5 308V330M516.5 333V346M517.5 310V325M518.5 333V346M519.5 312V331M520.5 320V347M521.5 316V337M522.5 320V346M523.5 322V346M524.5 323V345M525.5 330V347M526.5 326V344M527.5 336V347M528.5 331V339M529.5 341V347M530.5 335V339M531.5 341V348M532.5 337V345M533.5 340V348M534.5 338V346M535.5 339V348M536.5 340V348M537.5 340V347M538.5 342V348M539.5 341V346M540.5 345V348M541.5 342V346M542.5 346V349M543.5 344V346M544.5 345V349M545.5 345V348M546.5 346V349M547.5 347V349M548.5 347V354M549.5 349V355M550.5 348V356M551.5 351V357M552.5 349V357M553.5 354V359M554.5 350V354M555.5 356V361M556.5 350V355M557.5 356V364M558.5 351V361M559.5 355V369M560.5 352V367M561.5 352V374M562.5 354V373M563.5 352V373M564.5 359V381M565.5 353V374M566.5 376V389M567.5 354V373M568.5 383V398M569.5 354V378M570.5 369V409M571.5 356V392M572.5 364V418M573.5 355V417M574.5 359V422M575.5 370V427M576.5 357V421M577.5 383V433M578.5 357V393M579.5 397V438M580.5 357V381M581.5 402V440M582.5 358V413M583.5 390V442M584.5 357V426M585.5 362V442M586.5 359V434M587.5 357V427M588.5 366V438M589.5 356V415M590.5 395V438M591.5 355V399M592.5 404V431M593.5 356V385M594.5 383V426M595.5 354V394M596.5 370V420M597.5 355V414M598.5 362V415M599.5 361V415M600.5 354V409M601.5 368V413M602.5 354V386M603.5 375V410M604.5 355V376M605.5 389V408M606.5 354V384M607.5 380V406M608.5 354V391M609.5 360V403M610.5 354V396M611.5 355V402M612.5 356V399M613.5 353V391M614.5 360V399M615.5 354V383M616.5 377V397M617.5 353V375M618.5 382V395M619.5 353V372M620.5 366V392M621.5 353V377M622.5 360V390M623.5 352V388M624.5 355V387M625.5 357V388M626.5 353V382M627.5 361V385M628.5 352V368M629.5 365V382M630.5 352V361M631.5 367V377M632.5 351V366M633.5 359V370M634.5 349V364M635.5 350V361M636.5 348V359M637.5 348V352M638.5 338V351M639.5 336V344M640.5 337V348M641.5 328V339M642.5 337V347M643.5 322V331M644.5 331V346M645.5 312V331M646.5 320V345M647.5 308V341M648.5 313V345M649.5 308V344M650.5 305V343M651.5 308V345M652.5 298V327M653.5 314V344M654.5 300V320M655.5 331V345M656.5 301V323M657.5 325V344M658.5 304V330M659.5 311V344M660.5 310V337M661.5 313V343M662.5 317V344M663.5 317V341M664.5 329V344M665.5 322V339M666.5 334V345M667.5 324V331M668.5 336V345M669.5 327V334M670.5 334V345M671.5 329V338M672.5 333V346M673.5 331V345M674.5 333V346M675.5 335V346M676.5 334V346M677.5 338V347M678.5 336V343M679.5 341V347M680.5 338V343M681.5 344V347M682.5 341V345M683.5 344V348M684.5 343V347M685.5 344V349M686.5 346V349M687.5 346V350M688.5 349V351M689.5 349V353M690.5 352V354M691.5 350V356M692.5 356V360M693.5 351V355M694.5 357V365M695.5 353V359M696.5 357V368M697.5 353V366M698.5 356V371M699.5 354V370M700.5 353V375M701.5 357V376M702.5 354V372M703.5 362V381M704.5 354V371M705.5 378V388M706.5 355V371M707.5 379V398M708.5 356V383M709.5 365V408M710.5 356V397M711.5 361V417M712.5 358V420M713.5 358V420M714.5 379V429M715.5 357V417M716.5 392V436M717.5 358V385M718.5 405V435M719.5 358V385M720.5 392V438M721.5 357V418" stroke="#3232c8" stroke-width="1" fill="none"/>
<path d="M140.5 356V361M142.5 355V362M143.5 354V356M144.5 355V363M145.5 355V361M146.5 356V365M147.5 357V367M148.5 358V365M149.5 362V374M150.5 360V362M151.5 370V382M153.5 381V395M154.5 365V370M155.5 380V404M156.5 367V380M157.5 368V402M158.5 369V391M159.5 370V393M160.5 371V407M161.5 371V388M162.5 392V421M163.5 373V380M164.5 408V429M166.5 395V429M167.5 375V378M168.5 383V426M169.5 374V399M170.5 374V418M171.5 374V412M172.5 374V404M173.5 374V420M174.5 373V382M175.5 384V424M176.5 372V374M177.5 413V426M178.5 371V376M179.5 398V421M180.5 370V381M181.5 370V409M182.5 369V387M183.5 369V396M184.5 368V399M185.5 368V386M186.5 376V405M187.5 367V376M188.5 385V406M190.5 387V404M192.5 377V402M193.5 366V378M194.5 368V396M195.5 365V385M196.5 365V385M197.5 364V388M198.5 364V379M199.5 365V391M200.5 363V367M201.5 371V392M203.5 382V392M204.5 361V365M205.5 374V388M206.5 361V368M207.5 360V381M208.5 360V371M209.5 359V373M210.5 359V377M211.5 358V367M212.5 364V379M213.5 358V362M214.5 367V378M216.5 365V374M217.5 356V357M218.5 359V369M219.5 354V360M220.5 353V360M221.5 351V356M222.5 349V351M223.5 346V349M224.5 344V346M225.5 344V346M226.5 337V341M228.5 331V338M230.5 323V337M231.5 333V340M232.5 320V338M233.5 326V339M234.5 323V338M235.5 319V338M236.5 329V337M237.5 311V335M238.5 333V337M239.5 308V318M240.5 335V337M241.5 309V318M242.5 334V337M243.5 315V336M244.5 331V338M245.5 322V338M246.5 325V339M247.5 329V340M248.5 325V339M249.5 336V341M250.5 327V338M252.5 330V336M254.5 333V338M255.5 341V344M256.5 335V342M257.5 340V344M258.5 338V344M259.5 339V345M260.5 340V345M261.5 339V345M262.5 344V346M263.5 340V345M264.5 345V346M265.5 340V343M266.5 346V347M267.5 342V344M268.5 346V347M269.5 344V348M270.5 346V348M271.5 346V348M272.5 346V349M273.5 347V350M274.5 348V351M275.5 350V353M276.5 350V352M277.5 355V357M278.5 352V353M279.5 356V360M280.5 353V355M281.5 354V362M282.5 355V357M283.5 356V363M284.5 356V362M285.5 357V364M286.5 358V368M287.5 358V363M288.5 365V376M290.5 374V383M292.5 374V391M293.5 364V370M294.5 372V397M295.5 366V382M296.5 367V396M297.5 368V393M298.5 369V387M299.5 370V409M300.5 371V381M301.5 398V421M302.5 372V376M303.5 414V427M304.5 372V374M305.5 384V423M306.5 372V381M307.5 372V416M308.5 372V401M309.5 372V408M310.5 372V413M311.5 372V394M312.5 378V417M313.5 371V374M314.5 389V418M316.5 399V416M318.5 386V413M319.5 369V381M320.5 374V406M321.5 368V389M322.5 368V394M323.5 367V394M324.5 367V380M325.5 367V401M326.5 367V373M327.5 389V405M328.5 366V369M329.5 394V404M330.5 366V368M331.5 371V398M332.5 365V373M333.5 365V392M334.5 365V385M335.5 365V386M336.5 365V392M337.5 365V377M338.5 371V394M340.5 377V393M342.5 379V392M343.5 362V367M344.5 370V388M345.5 361V372M346.5 361V379M347.5 360V374M348.5 360V370M349.5 359V378M350.5 359V365M351.5 367V379M352.5 358V360M353.5 368V375M355.5 360V369M356.5 355V357M357.5 355V364M358.5 353V359M359.5 352V357M360.5 350V356M361.5 349V351M362.5 345V350M363.5 342V345M364.5 344V346M365.5 334V337M367.5 327V338M368.5 340V341M369.5 322V338M370.5 330V339M371.5 321V339M372.5 322V338M373.5 324V338M374.5 316V337M375.5 326V337M376.5 311V331M377.5 335V337M378.5 309V324M380.5 309V322M381.5 332V337M382.5 313V330M383.5 328V338M384.5 323V339M385.5 328V340M386.5 332V340M387.5 326V341M388.5 337V341M389.5 326V335M390.5 340V342M391.5 329V335M393.5 334V340M394.5 342V344M395.5 336V344M396.5 339V344M397.5 337V344M398.5 338V345M399.5 340V345M400.5 337V345M401.5 344V345M402.5 338V343M404.5 339V341M405.5 345V346M406.5 342V345M407.5 346V348M408.5 345V349M409.5 346V350M410.5 347V351M411.5 349V352M412.5 350V353M413.5 350V352M414.5 352V356M415.5 352V353M416.5 357V360M417.5 353V355M418.5 358V363M419.5 355V357M420.5 355V364M421.5 356V360M422.5 357V365M423.5 358V367M424.5 358V366M425.5 363V375M426.5 360V365M427.5 372V383M429.5 376V389M431.5 374V396M432.5 367V377M433.5 370V400M434.5 369V387M435.5 370V402M436.5 371V404M437.5 373V396M438.5 377V417M439.5 374V380M440.5 391V426M442.5 416V436M443.5 376V382M444.5 403V434M445.5 376V391M446.5 376V422M447.5 375V401M448.5 375V406M449.5 375V416M450.5 374V395M451.5 389V425M452.5 373V382M453.5 400V425M455.5 394V418M456.5 371V372M457.5 380V411M458.5 369V385M459.5 369V402M460.5 368V392M461.5 367V389M462.5 367V396M463.5 367V375M464.5 371V401M465.5 366V369M466.5 394V404M467.5 366V368M468.5 387V401M469.5 365V371M470.5 365V394M471.5 365V375M472.5 364V385M473.5 364V385M474.5 363V379M475.5 367V390M476.5 363V370M477.5 373V390M479.5 378V388M481.5 371V386M482.5 361V368M483.5 364V382M484.5 360V372M485.5 360V375M486.5 359V375M487.5 359V367M488.5 359V379M489.5 358V362M490.5 370V380M491.5 357V359M492.5 369V373M493.5 355V357M494.5 361V367M495.5 353V356M496.5 353V359M497.5 352V355M498.5 350V353M499.5 349V353M500.5 348V349M501.5 345V347M502.5 341V345M503.5 343V345M504.5 332V336M505.5 341V343M506.5 323V332M507.5 337V341M508.5 322V340M509.5 332V340M510.5 324V340M511.5 324V339M512.5 326V339M513.5 317V335M514.5 331V338M515.5 314V330M517.5 316V325M519.5 317V331M520.5 333V340M521.5 322V337M522.5 331V341M523.5 330V342M524.5 331V342M525.5 338V343M526.5 331V343M527.5 341V344M528.5 333V339M529.5 344V345M530.5 336V339M531.5 344V345M532.5 339V345M533.5 344V346M534.5 341V346M535.5 342V346M536.5 343V347M537.5 342V347M538.5 344V347M539.5 342V346M540.5 346V347M541.5 343V346M543.5 344V346M544.5 347V348M545.5 346V348M546.5 347V348M547.5 347V349M548.5 348V352M549.5 349V353M550.5 350V353M551.5 351V355M552.5 351V353M553.5 354V358M555.5 356V360M557.5 356V361M558.5 354V356M559.5 355V364M560.5 355V361M561.5 356V365M562.5 356V366M563.5 357V363M564.5 359V374M565.5 359V363M566.5 376V385M567.5 361V364M568.5 383V392M569.5 364V365M570.5 369V397M571.5 366V374M572.5 367V398M573.5 368V391M574.5 369V397M575.5 370V407M576.5 371V389M577.5 383V418M578.5 372V374M579.5 397V423M581.5 402V428M582.5 373V383M583.5 390V426M584.5 374V395M585.5 374V414M586.5 373V403M587.5 373V397M588.5 372V416M589.5 372V386M590.5 395V425M591.5 371V376M592.5 404V422M594.5 383V412M595.5 368V373M596.5 370V403M597.5 367V387M598.5 366V395M599.5 366V394M600.5 366V384M601.5 368V398M602.5 365V370M603.5 375V400M605.5 389V401M606.5 364V368M607.5 380V398M608.5 364V373M609.5 364V390M610.5 363V378M611.5 363V385M612.5 363V382M613.5 363V374M614.5 362V387M615.5 362V368M616.5 377V391M617.5 361V364M618.5 382V390M619.5 361V362M620.5 366V385M621.5 360V365M622.5 360V380M623.5 360V372M624.5 359V375M625.5 359V376M626.5 359V368M627.5 361V377M628.5 358V360M629.5 365V377M631.5 367V374M632.5 355V358M633.5 359V367M634.5 353V358M635.5 352V358M636.5 350V355M637.5 349V351M638.5 343V348M639.5 338V344M640.5 342V344M641.5 331V339M643.5 325V331M644.5 338V341M645.5 317V331M646.5 332V339M647.5 318V338M648.5 327V338M649.5 323V337M650.5 317V337M651.5 324V336M652.5 306V327M653.5 330V336M654.5 306V320M656.5 309V323M657.5 335V336M658.5 312V330M659.5 327V337M660.5 320V337M661.5 325V338M662.5 329V339M663.5 326V339M664.5 337V340M665.5 327V339M666.5 339V341M667.5 327V331M668.5 340V341M669.5 329V334M670.5 340V342M671.5 332V338M672.5 339V343M673.5 336V343M674.5 338V343M675.5 339V344M676.5 338V344M677.5 342V345M678.5 338V343M679.5 344V345M680.5 339V343M682.5 342V345M683.5 346V347M684.5 344V347M685.5 346V348M686.5 347V349M687.5 347V350M688.5 349V350M689.5 350V351M690.5 352V354M691.5 352V353M692.5 356V359M694.5 357V363M696.5 357V365M697.5 356V360M698.5 356V365M699.5 357V364M700.5 357V365M701.5 358V369M702.5 359V363M703.5 362V376M704.5 360V362M705.5 378V384M706.5 362V364M707.5 379V392M708.5 365V369M709.5 366V395M710.5 367V378M711.5 368V395M712.5 369V396M713.5 371V393M714.5 379V413M715.5 373V386M716.5 392V423M718.5 405V423M720.5 392V424M721.5 373V387" stroke="#6464dc" stroke-width="1" fill="none"/>
<rect x="140" y="348" width="582" height="1" fill="#000"/>
<rect x="407" y="198" width="1" height="301" fill="#000"/>
</svg>

<div class="a" style="left:728px;top:193px;width:15px;height:320px;background:#edf0f5"></div>
<div class="a" style="left:729px;top:194px;width:13px;height:14px;background:linear-gradient(#f6f8fa,#dde2e6);border:1px solid #c4ccd2"></div>
<svg class="a" style="left:731px;top:197px" width="10" height="8"><path d="M1 6 H9 L5 1Z" fill="#9aa8b0"/></svg>
<div class="a" style="left:729px;top:208px;width:13px;height:276px;background:linear-gradient(to right,#ffc21a,#f9b214 35%,#f39a0a 55%,#f7ac14)"></div>
<div class="a" style="left:729px;top:498px;width:13px;height:14px;background:linear-gradient(#f6f8fa,#dde2e6);border:1px solid #c4ccd2"></div>
<svg class="a" style="left:731px;top:502px" width="10" height="8"><path d="M1 1 H9 L5 6Z" fill="#000"/></svg>


<div class="a" style="left:3px;top:513px;width:725px;height:15px;background:#edf0f5"></div>
<div class="a" style="left:140px;top:514px;width:14px;height:13px;background:linear-gradient(#f6f8fa,#dde2e6);border:1px solid #c4ccd2"></div>
<svg class="a" style="left:143px;top:516px" width="8" height="10"><path d="M6 1 V9 L1 5Z" fill="#000"/></svg>
<div class="a" style="left:196px;top:514px;width:19px;height:13px;border-radius:3px;background:linear-gradient(#ffc21a,#f9b214 35%,#f39a0a 55%,#f7ac14)"></div>
<div class="a" style="left:713px;top:514px;width:14px;height:13px;background:linear-gradient(#f6f8fa,#dde2e6);border:1px solid #c4ccd2"></div>
<svg class="a" style="left:716px;top:516px" width="8" height="10"><path d="M2 1 V9 L7 5Z" fill="#000"/></svg>
<div class="hl" style="left:3px;top:528px;width:740px;background:#9ea6ae"></div>

<div class="grip" style="left:3px;top:529px;height:54px;width:11px"></div>

<div class="hl" style="left:3px;top:583px;width:740px"></div>
<div class="t" style="left:15px;top:536px;font-size:13px">Project Rate (Hz):</div>
<div class="a" style="left:15px;top:554px;width:80px;height:27px;border:1px solid #a8b8c6;background:#fff"></div>
<div class="t" style="left:19px;top:561px;font-size:12.5px;font-family:'Liberation Serif', serif;color:#6a6a6a">44100</div>
<div class="a" style="left:69px;top:555px;width:25px;height:25px;background:linear-gradient(#e8ecf0,#d4dade);border-left:1px solid #b4bcc4"></div>
<svg class="a" style="left:75px;top:562px" width="14" height="11"><rect x="0" y="0.5" width="13" height="1.6" fill="#000"/><path d="M0 3 H13 L6.5 10Z" fill="#000"/></svg>
<div class="vl" style="left:132px;top:554px;height:26px;background:#c4c8ce"></div>
<div class="t" style="left:141px;top:561px;font-size:13px">Snap To</div>
<div class="a" style="left:198px;top:561px;width:13px;height:13px;border:1px solid #9aaab6;background:#fff;border-radius:2px"></div>
<div class="t" style="left:224px;top:536px;font-size:13px;letter-spacing:0.25px">Selection Start:</div>
<div class="a" style="left:352px;top:537px;width:13px;height:13px;border-radius:50%;border:1px solid #a8b4bc;background:radial-gradient(circle,#8494aa 0 3.3px,#f4f6f8 3.8px)"></div>
<div class="t" style="left:370px;top:536px;font-size:13px">End</div>
<div class="a" style="left:402px;top:537px;width:13px;height:13px;border-radius:50%;border:1px solid #a8b4bc;background:linear-gradient(135deg,#ffffff,#eef1f4)"></div>
<div class="t" style="left:420px;top:536px;font-size:13px">Length</div>
<div class="vl" style="left:475px;top:554px;height:26px;background:#c4c8ce"></div>
<div class="t" style="left:483px;top:536px;font-size:13px">Audio Position:</div>

<div class="a" style="left:224px;top:556px;width:120px;height:22px;border:1px solid #c4ccd4;background:#d3d3d3"></div><div class="a" style="left:332px;top:558px;width:9px;height:18px;background:linear-gradient(#fcfcfc,#e0e0e0);border-left:1px solid #b8b8b8"></div><svg class="a" style="left:333px;top:566px" width="8" height="5"><path d="M0 0 H8 L4 4.5Z" fill="#000"/></svg><div class="t" style="left:228px;top:562px;font-size:12.5px;color:#5c5cd6">0</div><div class="t" style="left:238.5px;top:562px;font-size:12.5px;color:#5c5cd6">0</div><div class="t" style="left:251px;top:562px;font-size:12.5px;color:#000">h</div><div class="t" style="left:263px;top:562px;font-size:12.5px;color:#5c5cd6">0</div><div class="t" style="left:273.5px;top:562px;font-size:12.5px;color:#5c5cd6">0</div><div class="t" style="left:285.5px;top:562px;font-size:12.5px;color:#000">m</div><div class="t" style="left:302px;top:562px;font-size:12.5px;color:#5c5cd6">0</div><div class="t" style="left:312.5px;top:562px;font-size:12.5px;color:#5c5cd6">0</div><div class="t" style="left:325px;top:562px;font-size:12.5px;color:#000">s</div>
<div class="a" style="left:350px;top:556px;width:120px;height:22px;border:1px solid #c4ccd4;background:#d3d3d3"></div><div class="a" style="left:458px;top:558px;width:9px;height:18px;background:linear-gradient(#fcfcfc,#e0e0e0);border-left:1px solid #b8b8b8"></div><svg class="a" style="left:459px;top:566px" width="8" height="5"><path d="M0 0 H8 L4 4.5Z" fill="#000"/></svg><div class="t" style="left:354px;top:562px;font-size:12.5px;color:#5c5cd6">0</div><div class="t" style="left:364.5px;top:562px;font-size:12.5px;color:#5c5cd6">0</div><div class="t" style="left:377px;top:562px;font-size:12.5px;color:#000">h</div><div class="t" style="left:389px;top:562px;font-size:12.5px;color:#5c5cd6">0</div><div class="t" style="left:399.5px;top:562px;font-size:12.5px;color:#5c5cd6">0</div><div class="t" style="left:411.5px;top:562px;font-size:12.5px;color:#000">m</div><div class="t" style="left:428px;top:562px;font-size:12.5px;color:#5c5cd6">0</div><div class="t" style="left:438.5px;top:562px;font-size:12.5px;color:#5c5cd6">0</div><div class="t" style="left:451px;top:562px;font-size:12.5px;color:#000">s</div>
<div class="a" style="left:483px;top:556px;width:120px;height:22px;border:1px solid #c4ccd4;background:#d3d3d3"></div><div class="a" style="left:591px;top:558px;width:9px;height:18px;background:linear-gradient(#fcfcfc,#e0e0e0);border-left:1px solid #b8b8b8"></div><svg class="a" style="left:592px;top:566px" width="8" height="5"><path d="M0 0 H8 L4 4.5Z" fill="#000"/></svg><div class="t" style="left:487px;top:562px;font-size:12.5px;color:#5c5cd6">0</div><div class="t" style="left:497.5px;top:562px;font-size:12.5px;color:#5c5cd6">0</div><div class="t" style="left:510px;top:562px;font-size:12.5px;color:#000">h</div><div class="t" style="left:522px;top:562px;font-size:12.5px;color:#5c5cd6">0</div><div class="t" style="left:532.5px;top:562px;font-size:12.5px;color:#5c5cd6">0</div><div class="t" style="left:544.5px;top:562px;font-size:12.5px;color:#000">m</div><div class="t" style="left:561px;top:562px;font-size:12.5px;color:#5c5cd6">0</div><div class="t" style="left:571.5px;top:562px;font-size:12.5px;color:#5c5cd6">0</div><div class="t" style="left:584px;top:562px;font-size:12.5px;color:#000">s</div>

<div class="a" style="left:5px;top:587px;width:608px;height:22px;border-top:1px solid #b8bec6;border-left:1px solid #b8bec6;border-right:1px solid #fff;border-bottom:1px solid #fff"></div>
<div class="a" style="left:615px;top:587px;width:128px;height:22px;border-top:1px solid #b8bec6;border-left:1px solid #b8bec6;border-bottom:1px solid #fff"></div>
<div class="t" style="left:8px;top:591px;font-size:14px;letter-spacing:0.28px">Click and drag to select audio</div>
<svg class="a" style="left:721px;top:589px" width="21" height="20"><defs><linearGradient id="cg" x1="0" y1="0" x2="1" y2="1"><stop offset="0" stop-color="#ffc21a"/><stop offset="1" stop-color="#f39a0a"/></linearGradient></defs><path d="M20 1 V18.5 H1Z" fill="url(#cg)"/><rect x="1" y="18" width="19" height="1" fill="#f7a812"/></svg>
<div class="a" style="left:0;top:610px;width:746px;height:3px;background:#e3e7ec;border-top:1px solid #d3d8de"></div>
</body></html>
